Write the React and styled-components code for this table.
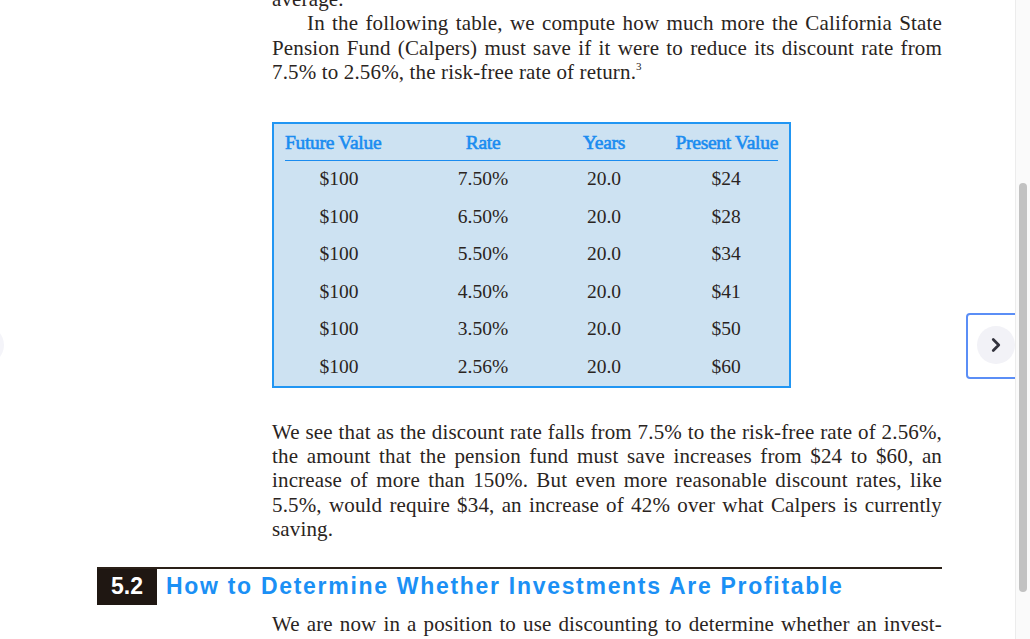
import React from "react";
import styled, { createGlobalStyle, css } from "styled-components";
import { ChevronRight, ChevronLeft } from "lucide-react";

const Global = createGlobalStyle`
  html, body { margin: 0; padding: 0; background: #fff; overflow: hidden; }
  * { box-sizing: border-box; }
`;

const Frame = styled.div`
  display: flex;
  width: 1030px;
  height: 639px;
  overflow: hidden;
  background: #fff;
`;

const Viewport = styled.div`
  position: relative;
  flex: 1;
  overflow: hidden;
`;

const Page = styled.div`
  margin-left: 97px;
  width: 845px;
  margin-top: -13px;
  font-family: "Liberation Serif", "Times New Roman", serif;
  color: #2a2421;
`;

const Body = styled.div`
  padding-left: 175px;
  padding-top: ${(p) => p.$top || 0}px;
`;

const Para = styled.div`
  font-size: 21px;
  letter-spacing: 0.15px;
  line-height: 24.4px;
  margin-bottom: ${(p) => p.$after || 0}px;
`;

const Line = styled.span`
  display: block;
  text-align: justify;
  text-align-last: ${(p) => (p.$last ? "left" : "justify")};
  white-space: nowrap;
  ${(p) =>
    p.$indent &&
    css`
      padding-left: 35px;
    `}
  ${(p) =>
    !p.$last &&
    css`
      white-space: normal;
    `}
`;

const Sup = styled.sup`
  font-size: 11px;
  vertical-align: 9px;
  line-height: 0;
`;

const TableBox = styled.div`
  border: 2px solid #2196f3;
  background: #cde2f2;
  width: 519px;
  padding: 7px 11px 0;
  margin-bottom: 32px;
`;

const Grid = styled.div`
  display: grid;
  grid-template-columns: 108px 180px 62px 143px;
`;

const HeadCell = styled.div`
  font-size: 19.5px;
  line-height: 24px;
  color: #1a8cf0;
  -webkit-text-stroke: 0.6px #1a8cf0;
  letter-spacing: -0.3px;
  text-align: ${(p) => p.$align || "center"};
  padding-bottom: 5px;
  border-bottom: 1.5px solid #1a8cf0;
  white-space: nowrap;
`;

const Cell = styled.div`
  font-size: 19.5px;
  height: 37.5px;
  display: flex;
  align-items: center;
  justify-content: center;
  padding-left: ${(p) => p.$pad || 0}px;
  color: #2a2421;
`;

const SectionHead = styled.div`
  display: flex;
  align-items: stretch;
  border-top: 2px solid #2a2018;
`;

const SectionNum = styled.div`
  width: 60px;
  height: 36px;
  background: #1f1712;
  color: #fff;
  font-family: "Liberation Sans", Arial, sans-serif;
  font-weight: 700;
  font-size: 23px;
  display: flex;
  align-items: center;
  justify-content: center;
`;

const SectionTitle = styled.div`
  font-family: "Liberation Sans", Arial, sans-serif;
  font-weight: 700;
  font-size: 23px;
  letter-spacing: 1.7px;
  color: #1b90f5;
  padding-left: 9px;
  display: flex;
  align-items: center;
  white-space: nowrap;
`;

const NavCircle = styled.div`
  position: absolute;
  width: 38px;
  height: 38px;
  border-radius: 50%;
  background: #f2f2f7;
  color: #33333d;
  display: flex;
  align-items: center;
  justify-content: center;
`;

const PrevNav = styled(NavCircle)`
  left: -34px;
  top: 326px;
  background: #f4f4f9;
`;

const FocusRing = styled.div`
  position: absolute;
  left: 966px;
  top: 313px;
  width: 70px;
  height: 66px;
  border: 2px solid #5b8ef6;
  border-radius: 4px;
`;

const NextNav = styled(NavCircle)`
  left: 9px;
  top: 11px;
`;

const ScrollTrack = styled.div`
  width: 15px;
  height: 100%;
  background: #fafafa;
  border-left: 1px solid #ececec;
  padding-top: 183px;
  display: flex;
  justify-content: center;
`;

const Thumb = styled.div`
  width: 8px;
  height: 409px;
  border-radius: 4px;
  background: #c2c2c2;
`;

const rows = [
  ["7.50%", "$24"],
  ["6.50%", "$28"],
  ["5.50%", "$34"],
  ["4.50%", "$41"],
  ["3.50%", "$50"],
  ["2.56%", "$60"],
];

export default function App() {
  return (
    <>
      <Global />
      <Frame>
        <Viewport>
          <Page>
            <Body>
              <Para>
                <Line $last>average.</Line>
              </Para>
              <Para $after={37}>
                <Line $indent>
                  In the following table, we compute how much more the California State
                </Line>
                <Line>
                  Pension Fund (Calpers) must save if it were to reduce its discount rate from
                </Line>
                <Line $last>
                  7.5% to 2.56%, the risk-free rate of return.<Sup>3</Sup>
                </Line>
              </Para>
              <TableBox>
                <Grid>
                  <HeadCell $align="left">Future Value</HeadCell>
                  <HeadCell>Rate</HeadCell>
                  <HeadCell>Years</HeadCell>
                  <HeadCell $align="right">Present Value</HeadCell>
                  {rows.map(([rate, pv]) => (
                    <React.Fragment key={rate}>
                      <Cell>$100</Cell>
                      <Cell>{rate}</Cell>
                      <Cell>20.0</Cell>
                      <Cell $pad={39}>{pv}</Cell>
                    </React.Fragment>
                  ))}
                </Grid>
              </TableBox>
              <Para $after={25}>
                <Line>
                  We see that as the discount rate falls from 7.5% to the risk-free rate of 2.56%,
                </Line>
                <Line>
                  the amount that the pension fund must save increases from $24 to $60, an
                </Line>
                <Line>
                  increase of more than 150%. But even more reasonable discount rates, like
                </Line>
                <Line>
                  5.5%, would require $34, an increase of 42% over what Calpers is currently
                </Line>
                <Line $last>saving.</Line>
              </Para>
            </Body>
            <SectionHead>
              <SectionNum>5.2</SectionNum>
              <SectionTitle>How to Determine Whether Investments Are Profitable</SectionTitle>
            </SectionHead>
            <Body $top={7}>
              <Para>
                <Line>
                  We are now in a position to use discounting to determine whether an invest-
                </Line>
              </Para>
            </Body>
          </Page>
          <PrevNav>
            <ChevronLeft size={22} strokeWidth={2.8} />
          </PrevNav>
          <FocusRing>
            <NextNav>
              <ChevronRight size={22} strokeWidth={3} />
            </NextNav>
          </FocusRing>
        </Viewport>
        <ScrollTrack>
          <Thumb />
        </ScrollTrack>
      </Frame>
    </>
  );
}
